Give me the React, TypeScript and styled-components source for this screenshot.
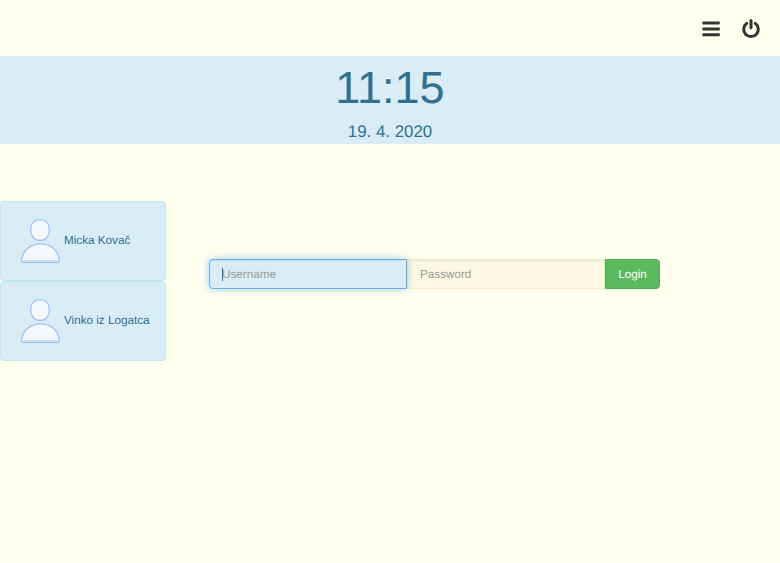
import React from 'react';
import styled, { createGlobalStyle } from 'styled-components';

const GlobalStyle = createGlobalStyle`
  *, *::before, *::after { box-sizing: border-box; }
  html, body { margin: 0; background: #ffffee; overflow: hidden; }
  body {
    font-family: "Liberation Sans", Arial, sans-serif;
    font-size: 11.7px;
    line-height: 18px;
    color: #31708f;
    text-rendering: geometricPrecision;
  }
`;

const Toolbar = styled.header`
  display: flex;
  justify-content: flex-end;
  height: 56px;
  padding: 17px 17px 0 0;
`;

const IconButton = styled.button`
  display: flex;
  width: 24px;
  height: 24px;
  margin-left: 16px;
  padding: 0;
  border: 0;
  background: transparent;
  color: #333;
`;

const ClockBand = styled.section`
  height: 88px;
  background: #d9edf7;
  text-align: center;
`;

const Time = styled.div`
  padding-top: 7px;
  font-size: 45px;
  line-height: 50px;
`;

const DateLine = styled.div`
  padding-top: 9px;
  font-size: 16.9px;
  line-height: 20px;
`;

const Main = styled.main`
  display: flex;
  align-items: flex-start;
  padding-top: 57px;
`;

const UserList = styled.div`
  display: flex;
  flex-direction: column;
  width: 166px;
`;

const UserCard = styled.button`
  display: flex;
  align-items: center;
  height: 80px;
  padding: 0 0 2px 19px;
  border: 1px solid #bce8f1;
  border-radius: 4px;
  background: #d9edf7;
  color: inherit;
  font: inherit;
  text-rendering: inherit;
  white-space: nowrap;
`;

const Avatar = styled.svg`
  flex: none;
  width: 40px;
  height: 48px;
  margin-right: 4px;
`;

const UserName = styled.span`
  padding-top: 2px;
`;

const LoginForm = styled.form`
  display: flex;
  width: 451px;
  margin: 58px 0 0 43px;
`;

const Field = styled.input<{ $active?: boolean }>`
  width: 198px;
  height: 30px;
  padding: 5px 12px;
  border: 1px solid ${p => (p.$active ? '#66afe9' : '#faebcc')};
  border-radius: ${p => (p.$active ? '4px 0 0 4px' : '0')};
  background: ${p => (p.$active ? '#d9edf7' : '#fcf8e3')};
  box-shadow: ${p => p.$active
    ? 'inset 0 1px 1px rgba(0,0,0,.075), 0 0 8px rgba(102,175,233,.6)'
    : 'inset 0 1px 1px rgba(0,0,0,.075)'};
  color: #31708f;
  font: inherit;
  line-height: 18px;
  text-rendering: inherit;
  outline: none;
  &::placeholder { color: #999; opacity: 1; }
`;

const FieldSlot = styled.div<{ $active?: boolean }>`
  position: relative;
  z-index: ${p => (p.$active ? 1 : 0)};
  display: flex;
`;

const Caret = styled.span`
  position: absolute;
  left: 13px;
  top: 9px;
  width: 1px;
  height: 13px;
  background: #31708f;
`;

const LoginButton = styled.button`
  width: 55px;
  height: 30px;
  padding: 2px 0 0;
  border: 1px solid #4cae4c;
  border-radius: 0 4px 4px 0;
  background: #5cb85c;
  color: #fff;
  font: inherit;
  text-rendering: inherit;
`;

const Person = () => (
  <Avatar viewBox="0 0 40 48" fill="#f5f9ff" stroke="#9bc3f5" strokeWidth="1.3">
    <path d="M20 3.6C26.2 3.6 29.4 7.8 29.4 13.5C29.4 20 25.7 24.5 20 24.5S10.6 20 10.6 13.5C10.6 7.8 13.8 3.6 20 3.6Z" />
    <path d="M20.5 27.8C31 27.8 37.8 34.6 39.1 42.8Q39.8 46.4 37.6 46.4H3.4Q1.2 46.4 1.9 42.8C3.2 34.6 10 27.8 20.5 27.8Z" />
    <path d="M2.8 45H38.2" stroke="#c9defa" strokeWidth="1.8" />
  </Avatar>
);

const users = ['Micka Kovač', 'Vinko iz Logatca'];

export default function App() {
  return (
    <>
      <GlobalStyle />
      <Toolbar>
        <IconButton aria-label="Menu">
          <svg width="24" height="24" viewBox="0 0 24 24" fill="currentColor">
            <rect x="3.4" y="4.5" width="17.4" height="3" rx=".7" />
            <rect x="3.4" y="10.4" width="17.4" height="3" rx=".7" />
            <rect x="3.4" y="16.3" width="17.4" height="3" rx=".7" />
          </svg>
        </IconButton>
        <IconButton aria-label="Power">
          <svg width="24" height="24" viewBox="0 0 24 24" fill="none" stroke="currentColor" strokeWidth="3" strokeLinecap="round">
            <path d="M7.7 6.4A7.3 7.3 0 1 0 16.3 6.4M12 3.4V10.8" />
          </svg>
        </IconButton>
      </Toolbar>
      <ClockBand>
        <Time>11:15</Time>
        <DateLine>19. 4. 2020</DateLine>
      </ClockBand>
      <Main>
        <UserList>
          {users.map(name => (
            <UserCard key={name}><Person /><UserName>{name}</UserName></UserCard>
          ))}
        </UserList>
        <LoginForm onSubmit={e => e.preventDefault()}>
          <FieldSlot $active>
            <Field $active placeholder="Username" />
            <Caret />
          </FieldSlot>
          <FieldSlot><Field placeholder="Password" type="password" /></FieldSlot>
          <LoginButton type="submit">Login</LoginButton>
        </LoginForm>
      </Main>
    </>
  );
}
